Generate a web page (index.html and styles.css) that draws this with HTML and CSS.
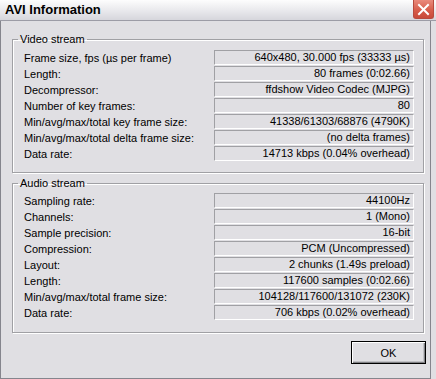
FILE: index.html
```html
<!DOCTYPE html>
<html lang="en">
<head>
    <meta charset="UTF-8">
    <title>AVI Information</title>
    <link rel="stylesheet" href="styles.css">
</head>
<body>
    <div class="window">
        <div class="titlebar">
            <span class="title">AVI Information</span>
            <span class="close">
                <svg width="13" height="13" viewBox="0 0 13 13">
                    <path d="M2 2 L11 11 M11 2 L2 11" stroke="#fff" stroke-width="2" stroke-linecap="square"/>
                </svg>
            </span>
        </div>
        <div class="client">
            <fieldset class="group video">
                <legend>Video stream</legend>
                <div class="row"><span class="label">Frame size, fps (&micro;s per frame)</span><span class="value">640x480, 30.000 fps (33333 &micro;s)</span></div>
                <div class="row"><span class="label">Length:</span><span class="value">80 frames (0:02.66)</span></div>
                <div class="row"><span class="label">Decompressor:</span><span class="value">ffdshow Video Codec (MJPG)</span></div>
                <div class="row"><span class="label">Number of key frames:</span><span class="value">80</span></div>
                <div class="row"><span class="label">Min/avg/max/total key frame size:</span><span class="value">41338/61303/68876 (4790K)</span></div>
                <div class="row"><span class="label">Min/avg/max/total delta frame size:</span><span class="value">(no delta frames)</span></div>
                <div class="row"><span class="label">Data rate:</span><span class="value">14713 kbps (0.04% overhead)</span></div>
            </fieldset>

            <fieldset class="group audio">
                <legend>Audio stream</legend>
                <div class="row"><span class="label">Sampling rate:</span><span class="value">44100Hz</span></div>
                <div class="row"><span class="label">Channels:</span><span class="value">1 (Mono)</span></div>
                <div class="row"><span class="label">Sample precision:</span><span class="value">16-bit</span></div>
                <div class="row"><span class="label">Compression:</span><span class="value">PCM (Uncompressed)</span></div>
                <div class="row"><span class="label">Layout:</span><span class="value">2 chunks (1.49s preload)</span></div>
                <div class="row"><span class="label">Length:</span><span class="value">117600 samples (0:02.66)</span></div>
                <div class="row"><span class="label">Min/avg/max/total frame size:</span><span class="value">104128/117600/131072 (230K)</span></div>
                <div class="row"><span class="label">Data rate:</span><span class="value">706 kbps (0.02% overhead)</span></div>
            </fieldset>

            <div class="buttons">
                <button type="button" class="ok">OK</button>
            </div>
        </div>
    </div>
</body>
</html>
```

FILE: styles.css
```css
body {
    margin: 0;
    font-family: "Liberation Sans", Arial, sans-serif;
    font-size: 11px;
    color: #000;
    background: #e0dfe3;
}
.window {
    width: 436px;
    height: 379px;
    display: flex;
    flex-direction: column;
    background: #e0dfe3;
    overflow: hidden;
}
.titlebar {
    height: 20px;
    flex: none;
    display: flex;
    justify-content: space-between;
    align-items: flex-start;
    padding-left: 5px;
    background: linear-gradient(#fdfdfd, #e6e6ea 60%, #d6d6dc);
    border-bottom: 1px solid #9c9ca6;
}
.title {
    font-size: 13px;
    font-weight: bold;
    line-height: 19px;
}
.close {
    width: 21px;
    height: 19px;
    margin-right: 2px;
    display: flex;
    align-items: center;
    justify-content: center;
    box-sizing: border-box;
    border: 1px solid #b84a3e;
    border-top: none;
    border-radius: 0 0 3px 3px;
    background: linear-gradient(#e98a7c, #d65a48 60%, #c84a3a);
}
.client {
    flex: 1;
    margin-right: 5px;
    padding: 12px 6px 0 11px;
    border-left: 1px solid #85858d;
    border-right: 1px solid #85858d;
    border-bottom: 1px solid #85858d;
}
.group {
    margin: 0;
    padding: 4px 9px 10px 11px;
    border: 1px solid #a0a0a4;
    box-shadow: inset 1px 1px 0 #fff, 1px 1px 0 #fff;
}
.group legend {
    margin-left: -6px;
    padding: 0 2px;
    line-height: 13px;
}
.audio {
    margin-top: 4px;
    padding-top: 3px;
    padding-bottom: 11px;
}
.row {
    display: grid;
    grid-template-columns: 1fr 200px;
    align-items: center;
    margin-bottom: 1px;
}
.label {
    white-space: nowrap;
}
.value {
    height: 15px;
    box-sizing: border-box;
    padding-right: 3px;
    border: 1px solid;
    border-color: #a0a0a4 #fff #fff #a0a0a4;
    text-align: right;
    line-height: 13px;
    white-space: nowrap;
}
.buttons {
    display: flex;
    justify-content: flex-end;
    margin-top: 8px;
    margin-right: -2px;
}
.ok {
    width: 75px;
    height: 23px;
    margin: 0;
    padding: 0;
    font-family: inherit;
    font-size: 11px;
    background: #e0dfe3;
    border: 1px solid #000;
    box-shadow: inset 1px 1px 0 #fff, inset -1px -1px 0 #808084, inset -2px -2px 0 #c0c0c4;
}
```
